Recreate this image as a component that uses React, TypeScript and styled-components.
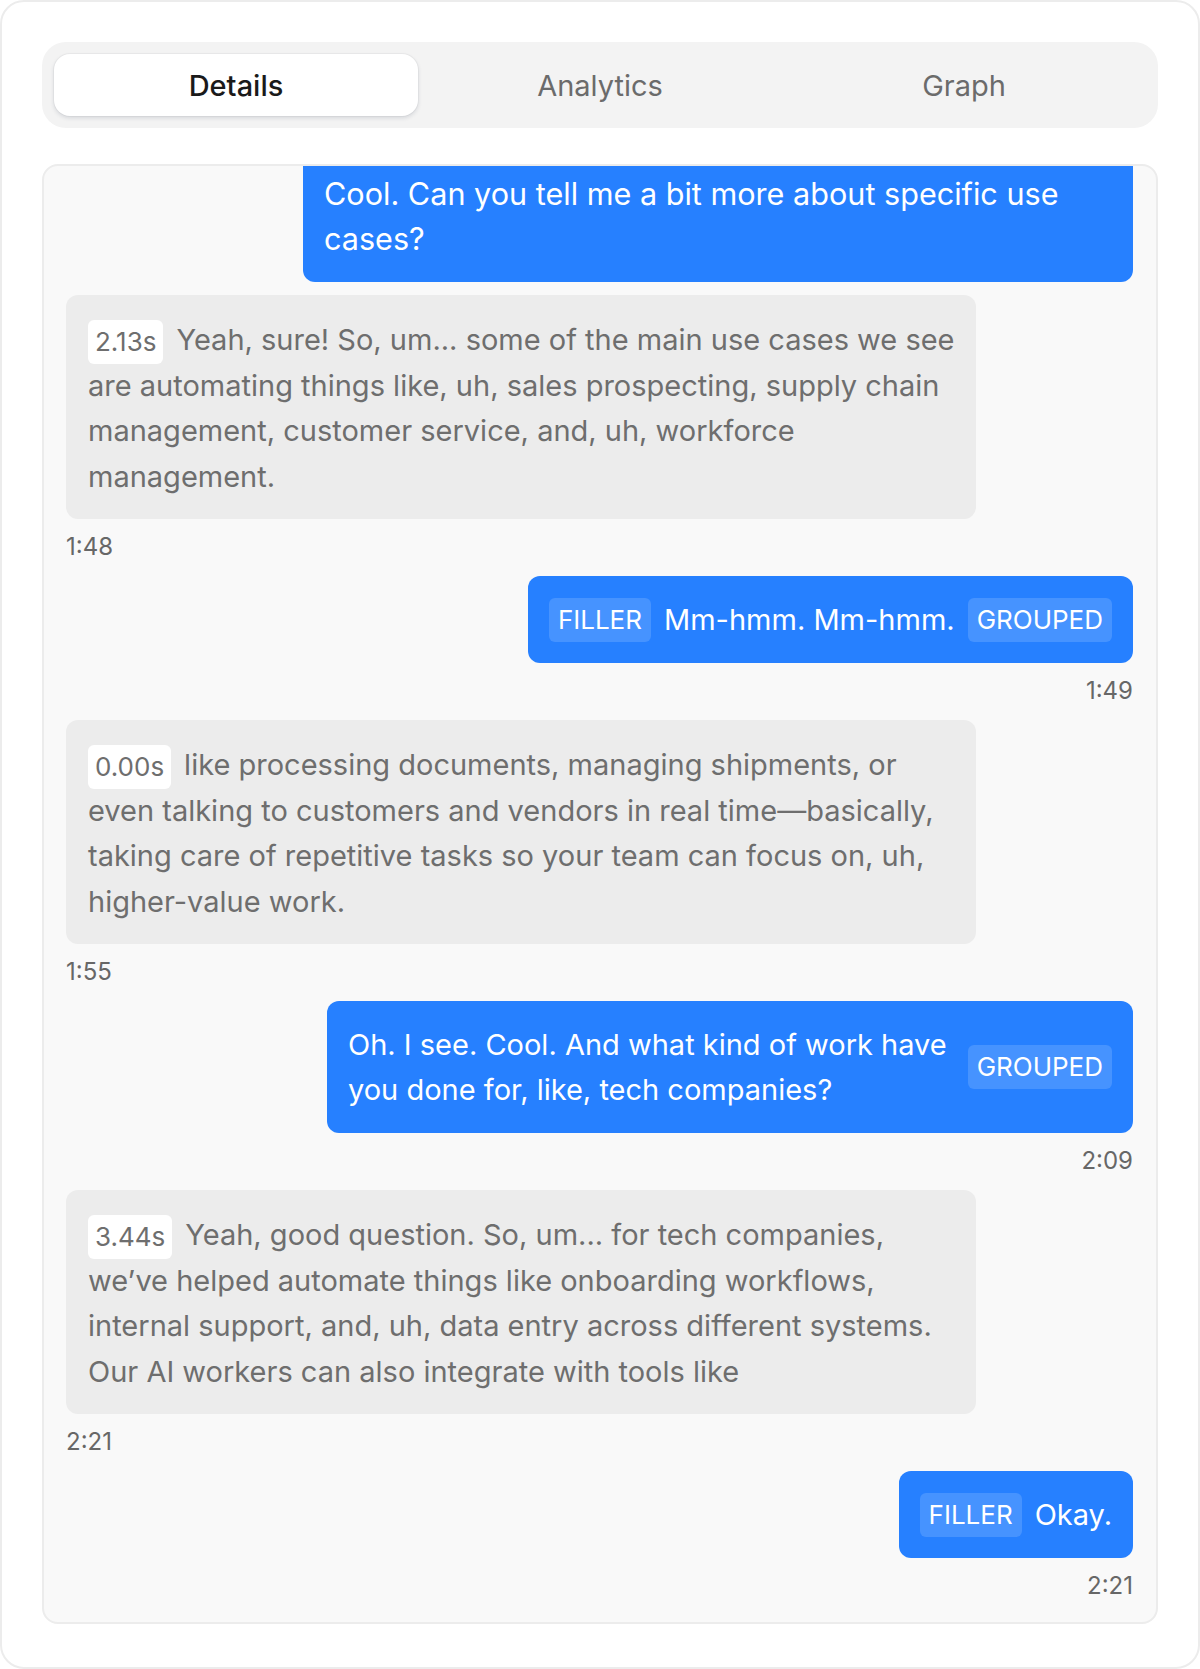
import React from 'react';
import styled, { createGlobalStyle } from 'styled-components';

const GlobalStyle = createGlobalStyle`
  * { box-sizing: border-box; }
  html, body {
    margin: 0;
    padding: 0;
    background: #ffffff;
  }
  body {
    font-family: Inter, "Noto Sans", "Liberation Sans", sans-serif;
    -webkit-font-smoothing: antialiased;
  }
`;

const Card = styled.div`
  height: 100vh;
  display: flex;
  flex-direction: column;
  gap: 36px;
  padding: 40px 40px 43px;
  border: 2px solid #ececec;
  border-radius: 24px;
  background: #ffffff;
`;

const TabBar = styled.div`
  display: flex;
  flex-shrink: 0;
  height: 86px;
  padding: 12px;
  background: #f3f3f3;
  border-radius: 24px;
`;

const Tab = styled.button<{ $active?: boolean }>`
  flex: 1;
  border: none;
  border-radius: 16px;
  font-family: inherit;
  font-size: 29px;
  font-weight: ${({ $active }) => ($active ? 500 : 400)};
  background: ${({ $active }) => ($active ? '#ffffff' : 'transparent')};
  color: ${({ $active }) => ($active ? '#1a1a1a' : '#6b6b6b')};
  box-shadow: ${({ $active }) =>
    $active ? '0 2px 4px rgba(30, 40, 70, 0.14), 0 0 0 1px rgba(0, 0, 0, 0.03)' : 'none'};
  cursor: pointer;
`;

const Panel = styled.section`
  flex: 1 1 0;
  min-height: 0;
  overflow: hidden;
  padding: 0 23px 20px 22px;
  background: #f9f9f9;
  border: 2px solid #ececec;
  border-radius: 16px;
`;

const Thread = styled.div`
  display: flex;
  flex-direction: column;
  gap: 13px;
  margin-top: -16px;
`;

const Group = styled.div<{ $out: boolean }>`
  display: flex;
  flex-direction: column;
  align-items: ${({ $out }) => ($out ? 'flex-end' : 'flex-start')};
`;

const Bubble = styled.div<{ $out: boolean; $max?: number; $size?: number }>`
  display: ${({ $out }) => ($out ? 'flex' : 'block')};
  align-items: center;
  gap: 13px;
  max-width: ${({ $max }) => $max ?? 910}px;
  padding: ${({ $out }) => ($out ? '21px' : '22px 21px 20px 22px')};
  border-radius: 12px;
  font-size: ${({ $size }) => $size ?? 29}px;
  line-height: ${({ $out }) => ($out ? 45 : 45.5)}px;
  background: ${({ $out }) => ($out ? '#2680ff' : '#ececec')};
  color: ${({ $out }) => ($out ? '#ffffff' : '#6e6e6e')};
`;

const Tag = styled.span<{ $out: boolean }>`
  display: inline-block;
  flex-shrink: 0;
  padding: ${({ $out }) => ($out ? '5px 9px' : '5px 7px')};
  border-radius: 6px;
  font-size: 26px;
  line-height: 34px;
  background: ${({ $out }) => ($out ? 'rgba(255, 255, 255, 0.15)' : '#ffffff')};
  color: ${({ $out }) => ($out ? '#ffffff' : '#6e6e6e')};
  ${({ $out }) => (!$out ? 'margin: -2px 13px -2px 0; vertical-align: middle;' : '')}
`;

const Stamp = styled.div`
  margin-top: 12px;
  font-size: 24px;
  line-height: 32px;
  color: #676767;
`;

type Message = {
  id: number;
  out: boolean;
  text: string;
  delay?: string;
  filler?: boolean;
  grouped?: boolean;
  time?: string;
  max?: number;
  size?: number;
};

const messages: Message[] = [
  {
    id: 1,
    out: true,
    text: 'Cool. Can you tell me a bit more about specific use cases?',
    max: 830,
    size: 30.6,
  },
  {
    id: 2,
    out: false,
    delay: '2.13s',
    text: 'Yeah, sure! So, um... some of the main use cases we see are automating things like, uh, sales prospecting, supply chain management, customer service, and, uh, workforce management.',
    time: '1:48',
  },
  { id: 3, out: true, filler: true, grouped: true, text: 'Mm-hmm. Mm-hmm.', time: '1:49' },
  {
    id: 4,
    out: false,
    delay: '0.00s',
    text: 'like processing documents, managing shipments, or even talking to customers and vendors in real time\u2014basically, taking care of repetitive tasks so your team can focus on, uh, higher-value work.',
    time: '1:55',
  },
  {
    id: 5,
    out: true,
    grouped: true,
    text: 'Oh. I see. Cool. And what kind of work have you done for, like, tech companies?',
    time: '2:09',
    max: 806,
  },
  {
    id: 6,
    out: false,
    delay: '3.44s',
    text: 'Yeah, good question. So, um... for tech companies, we\u2019ve helped automate things like onboarding workflows, internal support, and, uh, data entry across different systems. Our AI workers can also integrate with tools like',
    time: '2:21',
  },
  { id: 7, out: true, filler: true, text: 'Okay.', time: '2:21' },
];

const tabs = ['Details', 'Analytics', 'Graph'];

const ChatBubble: React.FC<{ message: Message }> = ({ message }) => {
  const { out, text, delay, filler, grouped, max, size } = message;
  if (!out) {
    return (
      <Bubble $out={false} $max={max} $size={size}>
        {delay && <Tag $out={false}>{delay}</Tag>}
        {text}
      </Bubble>
    );
  }
  return (
    <Bubble $out $max={max} $size={size}>
      {filler && <Tag $out>FILLER</Tag>}
      <span>{text}</span>
      {grouped && <Tag $out>GROUPED</Tag>}
    </Bubble>
  );
};

export default function App() {
  return (
    <>
      <GlobalStyle />
      <Card>
        <TabBar>
          {tabs.map((tab, i) => (
            <Tab key={tab} $active={i === 0}>
              {tab}
            </Tab>
          ))}
        </TabBar>
        <Panel>
          <Thread>
            {messages.map((m) => (
              <Group key={m.id} $out={m.out}>
                <ChatBubble message={m} />
                {m.time && <Stamp>{m.time}</Stamp>}
              </Group>
            ))}
          </Thread>
        </Panel>
      </Card>
    </>
  );
}
